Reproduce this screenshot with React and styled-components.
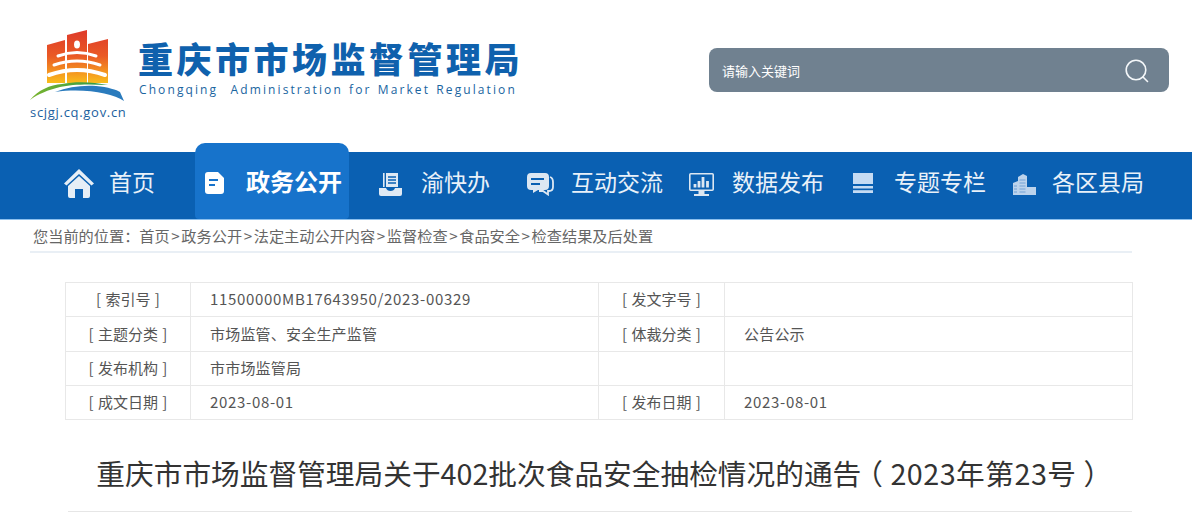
import React from "react";
import styled, { createGlobalStyle } from "styled-components";

const GlobalStyle = createGlobalStyle`
  html, body {
    margin: 0;
    padding: 0;
    background: #fff;
    overflow: hidden;
  }
  body {
    font-family: "Noto Sans CJK SC", "Noto Sans", sans-serif;
  }
`;

const Page = styled.div`
  width: 1192px;
  height: 532px;
  overflow: hidden;
`;

const Header = styled.header`
  height: 152px;
  box-sizing: border-box;
  padding: 28px 23px 0 30px;
  display: flex;
  align-items: flex-start;
`;

const LogoCol = styled.div`
  width: 97px;
  display: flex;
  flex-direction: column;
`;

const LogoUrl = styled.div`
  font-family: "Open Sans", sans-serif;
  font-size: 13px;
  line-height: 16px;
  letter-spacing: 0.7px;
  color: #1b5f9e;
  white-space: nowrap;
  margin-top: 2px;
`;

const TitleCol = styled.div`
  margin-left: 12px;
  padding-top: 12px;
  width: 400px;
`;

const SiteName = styled.div`
  font-size: 35px;
  line-height: 36px;
  font-weight: 900;
  letter-spacing: 3.5px;
  margin-left: -1px;
  color: #0f61ad;
  white-space: nowrap;
`;

const SiteEnglish = styled.div`
  font-family: "Open Sans", sans-serif;
  font-size: 12px;
  line-height: 16px;
  margin-top: 6px;
  letter-spacing: 2.1px;
  word-spacing: 1px;
  color: #1a659f;
  white-space: pre;
`;

const SearchBar = styled.div`
  margin-left: auto;
  margin-top: 20px;
  width: 460px;
  height: 44px;
  box-sizing: border-box;
  padding: 1px 20px 0 13px;
  border-radius: 8px;
  background: #708190;
  display: flex;
  align-items: center;
  justify-content: space-between;
`;

const SearchHint = styled.span`
  font-size: 13px;
  color: #fff;
`;

const Nav = styled.nav`
  height: 67px;
  background: #0a60b2;
  border-bottom: 1px solid #8cc0ee;
  display: flex;
  align-items: stretch;
`;

const NavItem = styled.div`
  margin-left: ${(p) => p.$left}px;
  padding-bottom: 5px;
  display: flex;
  align-items: center;
  flex: none;
  color: ${(p) => (p.$active ? "#fff" : "#e9f1f9")};
  font-size: ${(p) => (p.$active ? 24 : 23)}px;
  line-height: 30px;
  font-weight: ${(p) => (p.$active ? 700 : 400)};
  white-space: nowrap;

  ${(p) =>
    p.$active &&
    `
    margin-top: -9px;
    padding: 9px 7px 5px 10px;
    width: 154px;
    box-sizing: border-box;
    background: #1773cb;
    border-radius: 10px 10px 4px 4px;
  `}
`;

const NavLabel = styled.span`
  padding-bottom: 4px;
`;

const IconBox = styled.span`
  display: flex;
  flex: none;
  margin-right: ${(p) => p.$gap}px;
`;

const Crumbs = styled.div`
  margin: 0 60px 0 30px;
  height: 33px;
  box-sizing: border-box;
  padding-left: 3px;
  border-bottom: 2px solid #e9eff5;
  font-size: 15.2px;
  line-height: 30px;
  color: #666;
  white-space: nowrap;
`;

const CrumbSep = styled.span`
  margin: 0 1.6px;
`;

const MetaTable = styled.table`
  margin: 29px 0 0 65px;
  width: 1067px;
  border-collapse: collapse;
  table-layout: fixed;
  font-size: 15px;
  color: #555;
`;

const Row = styled.tr`
  height: ${(p) => p.$h}px;
`;

const MetaLabel = styled.td`
  width: ${(p) => p.$w}px;
  box-sizing: border-box;
  border: 1px solid #e8e8e8;
  padding: 0 0 2px;
  text-align: center;
  word-spacing: 1px;
`;

const MetaValue = styled.td`
  width: ${(p) => p.$w}px;
  box-sizing: border-box;
  border: 1px solid #e8e8e8;
  padding: 0 0 2px 19px;
  letter-spacing: ${(p) => (p.$digits ? 0.68 : 0.2)}px;
`;

const ArticleTitle = styled.h1`
  margin: 32px 60px 0 68px;
  padding-bottom: 17px;
  border-bottom: 1px solid #e6e6e6;
  font-size: 28.7px;
  line-height: 42px;
  font-weight: 400;
  color: #333;
  text-align: center;
  text-indent: 9px;
  white-space: nowrap;
`;

const TitleIssue = styled.span`
  margin-left: -7px;
  letter-spacing: 0.5px;
`;

const Logo = () => (
  <svg width="97" height="74" viewBox="30 28 97 74">
    <defs>
      <linearGradient id="flag" x1="0" y1="30" x2="0" y2="88" gradientUnits="userSpaceOnUse">
        <stop offset="0" stopColor="#de3a2a" />
        <stop offset="0.45" stopColor="#ea5a25" />
        <stop offset="0.75" stopColor="#f59a1f" />
        <stop offset="1" stopColor="#fbd01a" />
      </linearGradient>
      <linearGradient id="swoosh" x1="30" y1="0" x2="100" y2="0" gradientUnits="userSpaceOnUse">
        <stop offset="0" stopColor="#7cb52c" />
        <stop offset="1" stopColor="#2f9a4b" />
      </linearGradient>
    </defs>
    <path d="M47 45 L65 40 V83 H47 Z" fill="url(#flag)" />
    <path d="M67 35 L87 30 V83 H67 Z" fill="url(#flag)" />
    <path d="M88 44 L108 39 V83 H88 Z" fill="url(#flag)" />
    <ellipse cx="77" cy="44.5" rx="3" ry="4" fill="#fff" />
    <path d="M58 56 Q77 49 96 56" fill="none" stroke="#fff" strokeWidth="3" strokeLinecap="round" />
    <path d="M54 65 Q77 57 100 65" fill="none" stroke="#fff" strokeWidth="3" strokeLinecap="round" />
    <path d="M49 75 Q77 65 105 75" fill="none" stroke="#fff" strokeWidth="4" strokeLinecap="round" />
    <path d="M30 100 C38 90 50 85 62 84 C76 81 94 82 108 85 C90 84 72 84 60 87 C48 90 38 94 30 100 Z" fill="url(#swoosh)" />
    <path d="M55 92 C68 87 82 85 96 86 C108 87 117 90 120 92 L124 101 C112 93 84 88 55 92 Z" fill="#2a7bbd" />
  </svg>
);

const SearchIcon = () => (
  <svg width="24" height="24" viewBox="0 0 24 24" fill="none" stroke="#f4f7f9" strokeWidth="1.6">
    <circle cx="11" cy="11" r="9.8" />
    <path d="M18 18 L22.5 22.5" strokeLinecap="round" />
  </svg>
);

const HomeIcon = () => (
  <svg width="30" height="30" viewBox="0 0 30 30" fill="#e6eef6">
    <path d="M15 1 L30 15.5 L27.5 17.5 L15 6 L2.5 17.5 L0 15.5 Z" />
    <path d="M15 8 L26 18 V28 Q26 30 24 30 H19 V21 H11 V30 H6 Q4 30 4 28 V18 Z" />
  </svg>
);

const DocIcon = () => (
  <svg width="20" height="22" viewBox="0 0 20 22">
    <path d="M3 0 H13 L19 6 V19 Q19 22 16 22 H3 Q0 22 0 19 V3 Q0 0 3 0 Z" fill="#fff" />
    <path d="M4 8 H13 M4 13 H10" stroke="#1773cb" strokeWidth="2" />
  </svg>
);

const DeskIcon = () => (
  <svg width="23" height="26" viewBox="0 -3 23 26">
    <path d="M4 0 H5.6 V14 H4 Z" fill="#dfe9f4" />
    <path d="M7 0 H19 V14 H7 Z" fill="#dfe9f4" />
    <path d="M9 4 H17 M9 7 H17 M9 10 H17" stroke="#0a60b2" strokeWidth="1.3" />
    <path d="M0 15 H7 Q8 18 11.5 18 Q15 18 16 15 H23 V21 Q23 23 21 23 H2 Q0 23 0 21 Z" fill="#dfe9f4" />
  </svg>
);

const ChatIcon = () => (
  <svg width="27" height="26" viewBox="0 -3 27 26">
    <path d="M23 4 Q26 5 26 9 V14 Q26 18 22 18 H21 V21.5 L16 18 H12" fill="none" stroke="#dce7f2" strokeWidth="1.8" />
    <path d="M4 0 H18 Q22 0 22 4 V13 Q22 17 18 17 H11 L6 20 V17 H4 Q0 17 0 13 V4 Q0 0 4 0 Z" fill="#dce7f2" />
    <path d="M4 6 H17 M4 11 H13" stroke="#0a60b2" strokeWidth="2" />
  </svg>
);

const ChartIcon = () => (
  <svg width="25" height="26" viewBox="0 -3 25 26" fill="none" stroke="#dce7f2">
    <rect x="0.8" y="0.8" width="23.4" height="16.4" rx="1" strokeWidth="1.6" />
    <path d="M6 14.5 V11 M10 14.5 V8 M14 14.5 V4 M18.5 14.5 V8" strokeWidth="2.8" />
    <path d="M12.5 17 V21" strokeWidth="6" />
    <path d="M5 22 H20" strokeWidth="2" />
  </svg>
);

const StackIcon = () => (
  <svg width="20" height="20" viewBox="0 0 20 20" fill="#c5dbf3">
    <rect x="0" y="0" width="20" height="11" />
    <rect x="0" y="13" width="20" height="2.5" />
    <rect x="0" y="17.2" width="20" height="2.8" />
  </svg>
);

const TowerIcon = () => (
  <svg width="23" height="24" viewBox="0 -3 23 24" fill="#bcd3ec">
    <path d="M0 9 L5 7 V21 H0 Z" />
    <path d="M5 3 L10 0 L14 2 V21 H5 Z" />
    <path d="M14 13 H23 V21 H14 Z" />
    <path d="M6.5 6 H12.5 M6.5 9 H12.5 M6.5 12 H12.5 M6.5 15 H12.5 M6.5 18 H12.5 M1 12 H4 M1 15 H4 M1 18 H4" stroke="#5f97d2" strokeWidth="0.8" />
  </svg>
);

const navItems = [
  { label: "首页", left: 64, gap: 15, Icon: HomeIcon },
  { label: "政务公开", left: 40, gap: 21, Icon: DocIcon, active: true },
  { label: "渝快办", left: 30, gap: 19, Icon: DeskIcon },
  { label: "互动交流", left: 37, gap: 17, Icon: ChatIcon },
  { label: "数据发布", left: 26, gap: 18, Icon: ChartIcon },
  { label: "专题专栏", left: 29, gap: 21, Icon: StackIcon },
  { label: "各区县局", left: 27, gap: 16, Icon: TowerIcon },
];

const crumbs = ["首页", "政务公开", "法定主动公开内容", "监督检查", "食品安全", "检查结果及后处置"];

const rows = [
  { h: 34, cells: ["[ 索引号 ]", "11500000MB17643950/2023-00329", "[ 发文字号 ]", ""], digits: true },
  { h: 35, cells: ["[ 主题分类 ]", "市场监管、安全生产监管", "[ 体裁分类 ]", "公告公示"] },
  { h: 34, cells: ["[ 发布机构 ]", "市市场监管局", "", ""] },
  { h: 34, cells: ["[ 成文日期 ]", "2023-08-01", "[ 发布日期 ]", "2023-08-01"], digits: true },
];

export default function App() {
  return (
    <Page>
      <GlobalStyle />
      <Header>
        <LogoCol>
          <Logo />
          <LogoUrl>scjgj.cq.gov.cn</LogoUrl>
        </LogoCol>
        <TitleCol>
          <SiteName>重庆市市场监督管理局</SiteName>
          <SiteEnglish>Chongqing  Administration for Market Regulation</SiteEnglish>
        </TitleCol>
        <SearchBar>
          <SearchHint>请输入关键词</SearchHint>
          <SearchIcon />
        </SearchBar>
      </Header>
      <Nav>
        {navItems.map(({ label, left, gap, Icon, active }) => (
          <NavItem key={label} $left={left} $active={active}>
            <IconBox $gap={gap}>
              <Icon />
            </IconBox>
            <NavLabel>{label}</NavLabel>
          </NavItem>
        ))}
      </Nav>
      <Crumbs>
        您当前的位置：
        {crumbs.map((crumb, i) => (
          <React.Fragment key={crumb}>
            {i > 0 && <CrumbSep>&gt;</CrumbSep>}
            {crumb}
          </React.Fragment>
        ))}
      </Crumbs>
      <MetaTable>
        <tbody>
          {rows.map(({ h, cells, digits }) => (
            <Row key={cells[0]} $h={h}>
              <MetaLabel $w={125}>{cells[0]}</MetaLabel>
              <MetaValue $w={408} $digits={digits}>{cells[1]}</MetaValue>
              <MetaLabel $w={126}>{cells[2]}</MetaLabel>
              <MetaValue $w={408} $digits={digits}>{cells[3]}</MetaValue>
            </Row>
          ))}
        </tbody>
      </MetaTable>
      <ArticleTitle>
        重庆市市场监督管理局关于402批次食品安全抽检情况的通告
        <TitleIssue>（ 2023年第23号 ）</TitleIssue>
      </ArticleTitle>
    </Page>
  );
}
